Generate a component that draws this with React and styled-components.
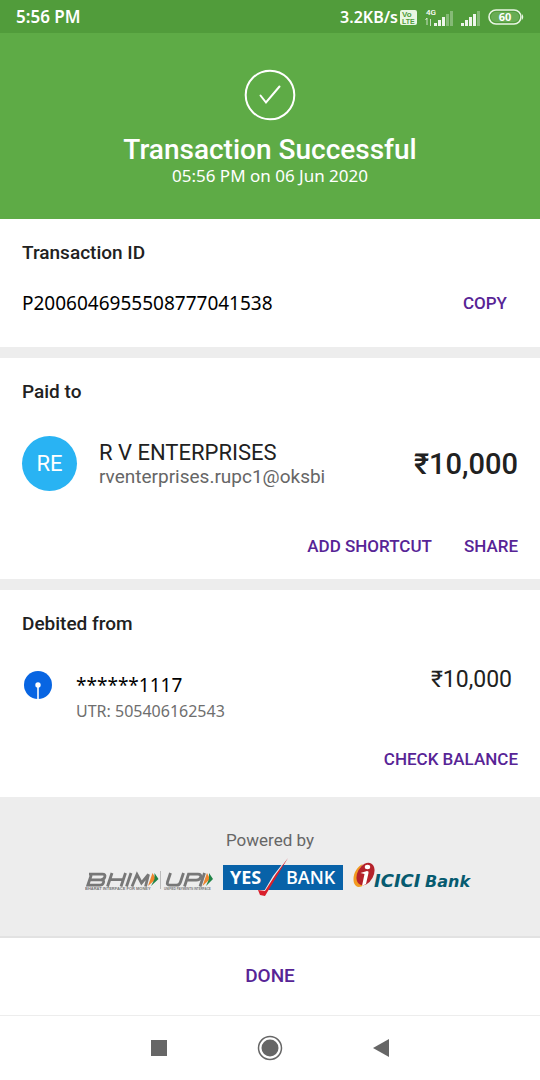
import React from "react";
import styled, { createGlobalStyle } from "styled-components";

const GlobalStyle = createGlobalStyle`
  *, *::before, *::after { box-sizing: border-box; }
  body { margin: 0; background: #fff; font-family: Roboto, "Liberation Sans", sans-serif; color: #212121; }
  h1, h2, p { margin: 0; }
`;

const Screen = styled.div`
  display: flex;
  flex-direction: column;
  min-height: 100vh;
`;

const StatusBar = styled.div`
  display: flex;
  align-items: center;
  justify-content: space-between;
  height: 33px;
  padding: 0 16px;
  background: #519c3b;
  color: #fff;
  font: 600 17px/24px "Noto Sans", sans-serif;
`;

const StatusGroup = styled.div`
  display: flex;
  align-items: center;
  gap: 2px;
`;

const Speed = styled.span`
  font: 600 16px/24px "Noto Sans", sans-serif;
`;

const Header = styled.header`
  display: flex;
  flex-direction: column;
  align-items: center;
  padding: 36px 16px 33px;
  background: #5eab46;
  color: #fff;
`;

const HeaderTitle = styled.h1`
  margin-top: 13px;
  font-size: 28px;
  font-weight: 500;
  line-height: 32px;
`;

const HeaderTime = styled.p`
  font: 400 17px/20px "Noto Sans", sans-serif;
`;

const Section = styled.section`
  display: flex;
  flex-direction: column;
  padding: 22px 22px ${(p) => p.$bottom}px;
  background: #fff;
`;

const SectionTitle = styled.h2`
  font-size: 19px;
  font-weight: 500;
  line-height: 24px;
`;

const Divider = styled.div`
  height: 11px;
  background: #ededed;
`;

const Row = styled.div`
  display: flex;
  align-items: ${(p) => p.$align || "center"};
  gap: ${(p) => p.$gap || 0}px;
  margin-top: ${(p) => p.$top}px;
  padding-right: ${(p) => p.$right || 0}px;
`;

const Reference = styled.span`
  flex: 1;
  color: #000;
  font: 400 19px/28px "Noto Sans", sans-serif;
`;

const Details = styled.div`
  flex: 1;
  display: flex;
  flex-direction: column;
  padding-top: ${(p) => p.$top || 0}px;
`;

const Avatar = styled.span`
  display: flex;
  align-items: center;
  justify-content: center;
  width: 55px;
  height: 55px;
  border-radius: 50%;
  background: #29b3f3;
  color: #fff;
  font-size: 22px;
`;

const BankBadge = styled.span`
  display: flex;
  padding: 7px 0 0 2px;
`;

const Payee = styled.span`
  font-size: 22px;
  line-height: 24px;
`;

const Handle = styled.span`
  color: #666;
  font-size: 19px;
  line-height: 24px;
`;

const Account = styled.span`
  color: #000;
  font: 400 19px/28px "Noto Sans", sans-serif;
`;

const Utr = styled.span`
  color: #6e6e6e;
  font: 400 16px/24px "Noto Sans", sans-serif;
`;

const Amount = styled.span`
  font-size: ${(p) => (p.$strong ? 29 : 23)}px;
  font-weight: ${(p) => (p.$strong ? 500 : 400)};
  line-height: 32px;
`;

const Actions = styled.div`
  display: flex;
  justify-content: flex-end;
  gap: 32px;
  margin-top: ${(p) => p.$top}px;
`;

const TextButton = styled.button`
  padding: 0;
  border: 0;
  background: none;
  color: #572496;
  font: 500 ${(p) => (p.$large ? 19 : 17)}px/24px Roboto, sans-serif;
  cursor: pointer;
`;

const Powered = styled.footer`
  display: flex;
  flex-direction: column;
  align-items: center;
  gap: 6px;
  padding: 31px 0 38px;
  border-bottom: 2px solid #e2e2e2;
  background: #ededed;
`;

const PoweredLabel = styled.p`
  color: #666;
  font-size: 17px;
  line-height: 24px;
`;

const Logos = styled.div`
  display: flex;
  align-items: center;
  gap: 10px;
  padding-left: 16px;
`;

const DoneBar = styled.div`
  display: flex;
  justify-content: center;
  padding: 26px 0 27px;
  border-bottom: 1px solid #ededed;
`;

const NavBar = styled.nav`
  display: grid;
  grid-template-columns: repeat(3, 111px);
  justify-content: center;
  height: 64px;
`;

const NavButton = styled.button`
  display: flex;
  align-items: center;
  justify-content: center;
  padding: 0;
  border: 0;
  background: none;
  cursor: pointer;
`;

const Bars = ({ x, filled }) =>
  [0, 1, 2, 3, 4].map((i) => (
    <rect key={i} x={x + i * 4} y={18 - i * 3} width="3" height={3 + i * 3} fill="#fff" opacity={i < filled ? 0.9 : 0.3} />
  ));

const StatusIcons = () => (
  <svg width="124" height="24" viewBox="0 0 124 24" aria-hidden="true">
    <rect x="0" y="5" width="17" height="15" rx="2" fill="#e9f6e4" />
    <g fill="#519c3b" fontFamily="Liberation Sans, sans-serif" fontWeight="700">
      <text x="2" y="12" fontSize="8">Vo</text>
      <text x="2" y="19" fontSize="7">LTE</text>
    </g>
    <text x="26" y="10" fill="#fff" fontFamily="Roboto, sans-serif" fontWeight="500" fontSize="8">4G</text>
    <path d="M27 20v-7l-1.500 2M30.500 14v7" stroke="#fff" fill="none" opacity=".7" />
    <Bars x={34} filled={3} />
    <Bars x={61} filled={4} />
    <rect x="89" y="5" width="32" height="14" rx="7" fill="none" stroke="#e9f6e4" strokeWidth="1.600" />
    <rect x="91" y="7" width="28" height="10" rx="5" fill="#78b765" opacity=".6" />
    <path d="M122 9q2.500 3 0 6z" fill="#e9f6e4" />
    <text x="105" y="16" textAnchor="middle" fill="#fff" fontFamily="Noto Sans, sans-serif" fontWeight="700" fontSize="11">60</text>
  </svg>
);

const SuccessIcon = () => (
  <svg width="52" height="52" viewBox="0 0 52 52" fill="none" stroke="#fff" strokeWidth="2" aria-hidden="true">
    <circle cx="26" cy="26" r="24.300" />
    <path d="M16.500 26.500l5.500 7L35.500 17.500" strokeLinecap="round" />
  </svg>
);

const BankMark = () => (
  <svg width="28" height="28" viewBox="0 0 28 28" aria-hidden="true">
    <circle cx="14" cy="14" r="14" fill="#0865e2" />
    <circle cx="14" cy="14" r="2.700" fill="#fff" />
    <path d="M14 14v14" stroke="#fff" strokeWidth="1.600" />
  </svg>
);

const BhimUpiLogo = () => (
  <svg width="128" height="40" viewBox="0 0 128 40" role="img" aria-label="BHIM UPI">
    <g transform="translate(0 2)">
      <g fill="none" stroke="#777" strokeWidth="2.800">
        <path d="M4 14.200h13.500q3.200 0 2.300 2.800t-4 2.800H5.500M15.500 19.800q4 0 3 2.800t-4 2.600H2.800l3.400-10" />
        <path d="M27 13l-4.500 13.500M40.500 13L36 26.500M25 19.700h13.500" />
        <path d="M46 13l-4.500 13.500" />
        <path d="M47 26.500l5-12 4.500 8.500 7-8.500-3 12" />
        <path d="M85.500 13l-3 9q-1 3.200 2.500 3.200h6.500q3 0 4-3.200l3-9" />
        <path d="M99.500 26.500l4-12.300h9.500q3.500 0 2.700 3t-4.500 3h-9" />
        <path d="M119.500 13l-4.500 13.500" />
      </g>
      <path d="M67.500 13l3.500 6-8 7z" fill="#ef852d" />
      <path d="M69.500 13l4 6-7.500 7 3.500-7z" fill="#208447" />
      <path d="M122 13l3 6-7.500 7z" fill="#ef852d" />
      <path d="M124 13l4 6-7 7 3-7z" fill="#208447" />
      <path d="M75.500 11v18" stroke="#bbb" />
      <g fill="#777" fontFamily="Liberation Sans, sans-serif" fontWeight="700">
        <text x="0" y="30" fontSize="4">BHARAT INTERFACE FOR MONEY</text>
        <text x="79" y="30" fontSize="3">UNIFIED PAYMENTS INTERFACE</text>
      </g>
    </g>
  </svg>
);

const YesBankLogo = () => (
  <svg width="120" height="40" viewBox="0 0 120 40" role="img" aria-label="Yes Bank">
    <rect x="0" y="7" width="120" height="25" fill="#0862a8" />
    <path d="M64 0L40 40l-4-1-2-7 6 3L50 18z" fill="#ededed" />
    <g fill="#fff" fontFamily="Open Sans, sans-serif" fontSize="18">
      <text x="7" y="26" fontWeight="700">YES</text>
      <text x="63" y="26" fontWeight="600">BANK</text>
    </g>
    <path d="M65 0Q52 21 42 38l-5-1-2-5 7 1Q52 16 65 0z" fill="#d91f2b" />
  </svg>
);

const IciciLogo = () => (
  <svg width="118" height="40" viewBox="0 0 118 40" role="img" aria-label="ICICI Bank">
    <path d="M10 6C3 9-1 18 1 25q3 7 10 2Q5 26 5 18 6 10 10 6z" fill="#f29a21" />
    <ellipse cx="12.500" cy="16" rx="8" ry="12" transform="rotate(28 12.500 16)" fill="#b5222b" />
    <ellipse cx="14.500" cy="9" rx="2.700" ry="2.200" fill="#fff" />
    <path d="M7.500 15l6.500-2q2 0 1.500 2L13 26l-4 2 2.500-12z" fill="#fff" />
    <g fill="#075b70" fontWeight="700" fontStyle="italic">
      <text x="21" y="29" fontSize="18" fontFamily="DejaVu Sans, sans-serif">ICICI</text>
      <text x="72" y="29" fontSize="16" fontFamily="DejaVu Sans, sans-serif">Bank</text>
    </g>
  </svg>
);

export default function App() {
  return (
    <>
      <GlobalStyle />
      <Screen>
        <StatusBar>
          <span>5:56 PM</span>
          <StatusGroup>
            <Speed>3.2KB/s</Speed>
            <StatusIcons />
          </StatusGroup>
        </StatusBar>
        <Header>
          <SuccessIcon />
          <HeaderTitle>Transaction Successful</HeaderTitle>
          <HeaderTime>05:56 PM on 06 Jun 2020</HeaderTime>
        </Header>
        <main>
          <Section $bottom={30}>
            <SectionTitle>Transaction ID</SectionTitle>
            <Row $top={24} $right={11}>
              <Reference>P2006046955508777041538</Reference>
              <TextButton type="button">COPY</TextButton>
            </Row>
          </Section>
          <Divider />
          <Section $bottom={21}>
            <SectionTitle>Paid to</SectionTitle>
            <Row $top={32} $gap={22}>
              <Avatar>RE</Avatar>
              <Details $top={2}>
                <Payee>R V ENTERPRISES</Payee>
                <Handle>rventerprises.rupc1@oksbi</Handle>
              </Details>
              <Amount $strong>₹10,000</Amount>
            </Row>
            <Actions $top={43}>
              <TextButton type="button">ADD SHORTCUT</TextButton>
              <TextButton type="button">SHARE</TextButton>
            </Actions>
          </Section>
          <Divider />
          <Section $bottom={26}>
            <SectionTitle>Debited from</SectionTitle>
            <Row $top={28} $gap={24} $align="flex-start" $right={6}>
              <BankBadge>
                <BankMark />
              </BankBadge>
              <Details $top={7}>
                <Account>******1117</Account>
                <Utr>UTR: 505406162543</Utr>
              </Details>
              <Amount>₹10,000</Amount>
            </Row>
            <Actions $top={24}>
              <TextButton type="button">CHECK BALANCE</TextButton>
            </Actions>
          </Section>
        </main>
        <Powered>
          <PoweredLabel>Powered by</PoweredLabel>
          <Logos>
            <BhimUpiLogo />
            <YesBankLogo />
            <IciciLogo />
          </Logos>
        </Powered>
        <DoneBar>
          <TextButton type="button" $large>DONE</TextButton>
        </DoneBar>
        <NavBar>
          <NavButton type="button" aria-label="Recent apps">
            <svg width="16" height="16"><rect width="16" height="16" fill="#666" /></svg>
          </NavButton>
          <NavButton type="button" aria-label="Home">
            <svg width="26" height="26" viewBox="0 0 26 26">
              <circle cx="13" cy="13" r="11.500" fill="none" stroke="#666" strokeWidth="1.500" />
              <circle cx="13" cy="13" r="8.500" fill="#666" />
            </svg>
          </NavButton>
          <NavButton type="button" aria-label="Back">
            <svg width="16" height="18"><path d="M16 0v18L0 9z" fill="#666" /></svg>
          </NavButton>
        </NavBar>
      </Screen>
    </>
  );
}
